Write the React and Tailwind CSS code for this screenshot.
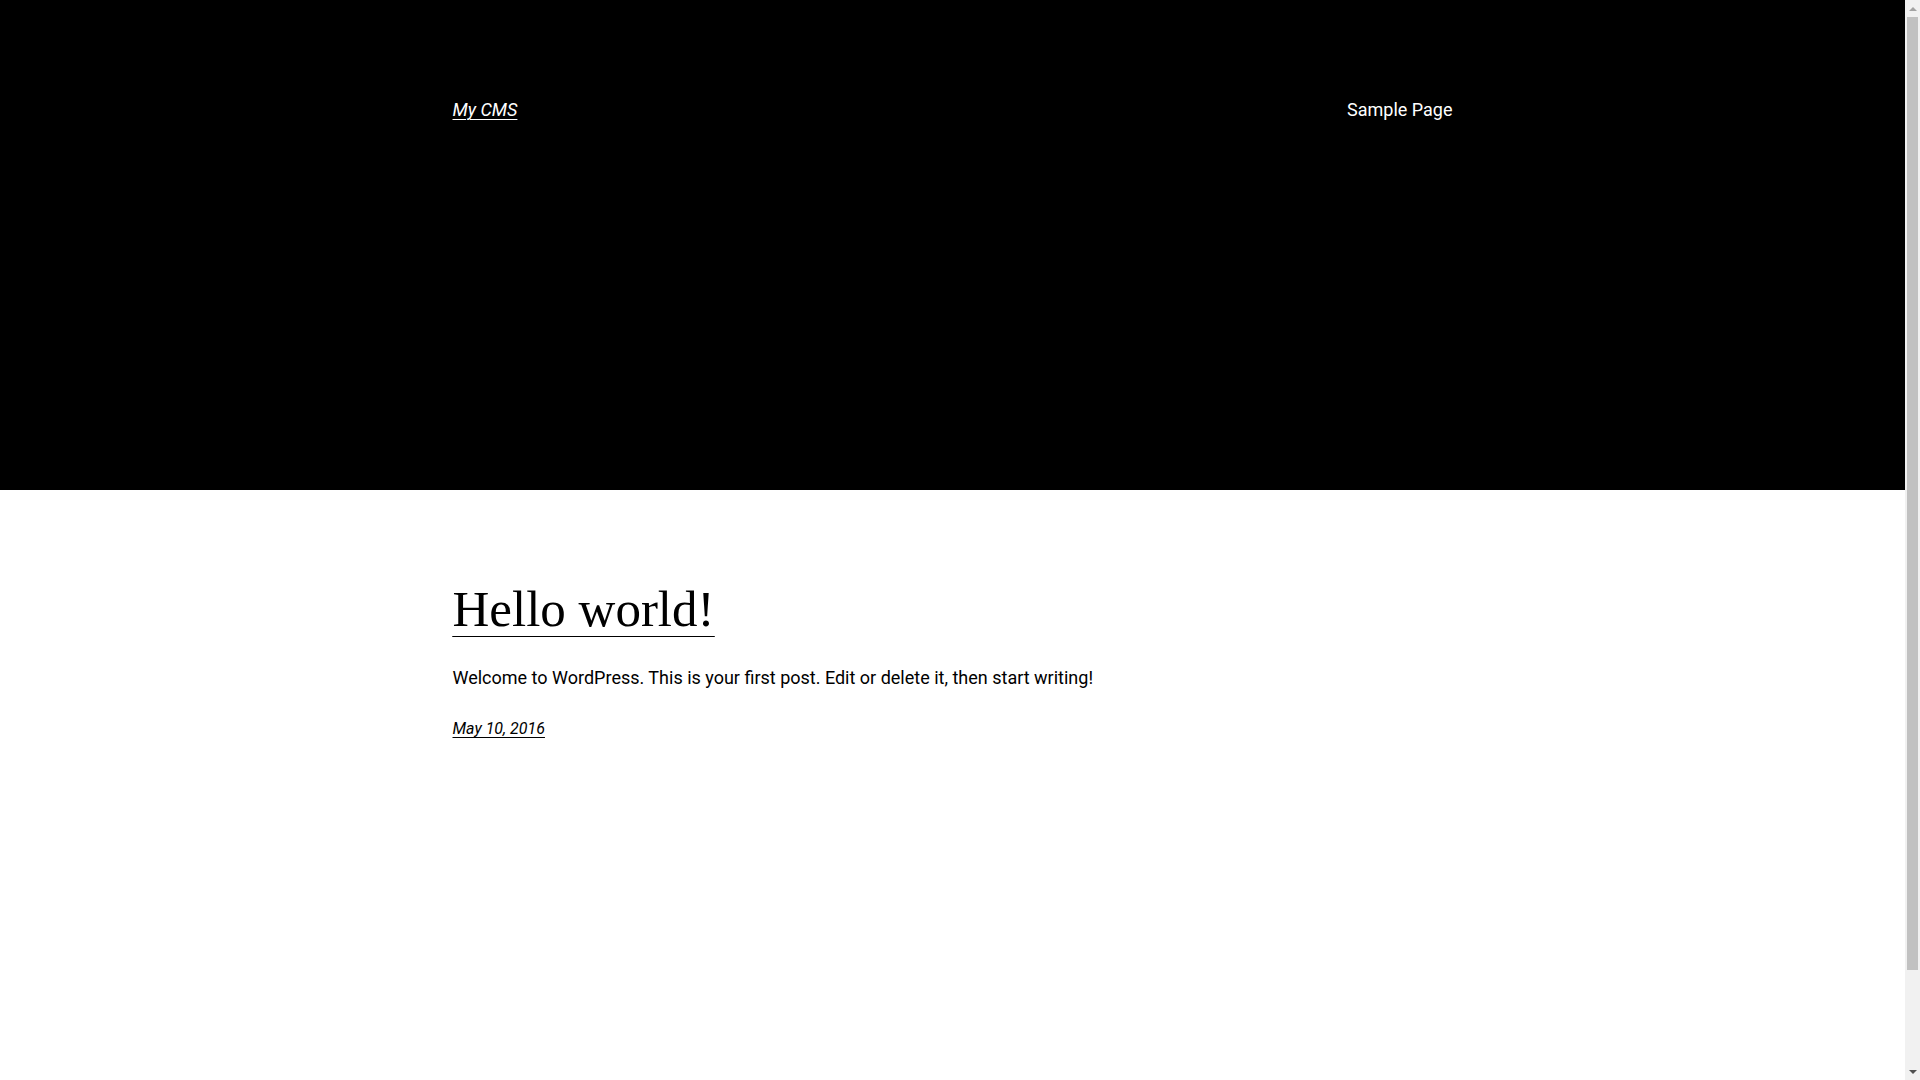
export default function App() {
  return (
    <div className="min-h-[1185px] bg-white pr-[15px]" style={{ fontFamily: "Roboto, 'Liberation Sans', sans-serif" }}>
      <header className="bg-black h-[490px] pt-[95px]">
        <div className="max-w-[1000px] mx-auto flex items-center justify-between">
          <a href="#" className="text-white text-[18px] leading-[29px] italic underline underline-offset-[3px] decoration-1">
            My CMS
          </a>
          <nav>
            <a href="#" className="text-white text-[18px] leading-[29px]">Sample Page</a>
          </nav>
        </div>
      </header>
      <main className="max-w-[1000px] mx-auto pt-[91px]">
        <h2
          className="text-black text-[51px] leading-[57px] font-normal underline decoration-1 underline-offset-[10px]"
          style={{ fontFamily: "'Liberation Serif', 'DejaVu Serif', serif" }}
        >
          <a href="#">Hello world!</a>
        </h2>
        <p className="text-black text-[18px] leading-[29px] mt-[25px]">
          Welcome to WordPress. This is your first post. Edit or delete it, then start writing!
        </p>
        <p className="mt-[24px] text-[16px] leading-[25px] italic">
          <a href="#" className="text-black underline underline-offset-[3px] decoration-1">May 10, 2016</a>
        </p>
      </main>
      <div className="fixed top-0 right-0 w-[15px] h-[1080px] bg-[#f1f1f1] flex flex-col items-center">
        <div className="h-[17px] flex items-center justify-center">
          <div className="w-0 h-0 border-l-[4px] border-r-[4px] border-b-[4px] border-l-transparent border-r-transparent border-b-[#a3a3a3]" />
        </div>
        <div className="w-[11px] h-[953px] bg-[#c1c1c1]" />
        <div className="flex-1" />
        <div className="h-[17px] flex items-center justify-center">
          <div className="w-0 h-0 border-l-[4px] border-r-[4px] border-t-[4px] border-l-transparent border-r-transparent border-t-[#505050]" />
        </div>
      </div>
    </div>
  );
}
